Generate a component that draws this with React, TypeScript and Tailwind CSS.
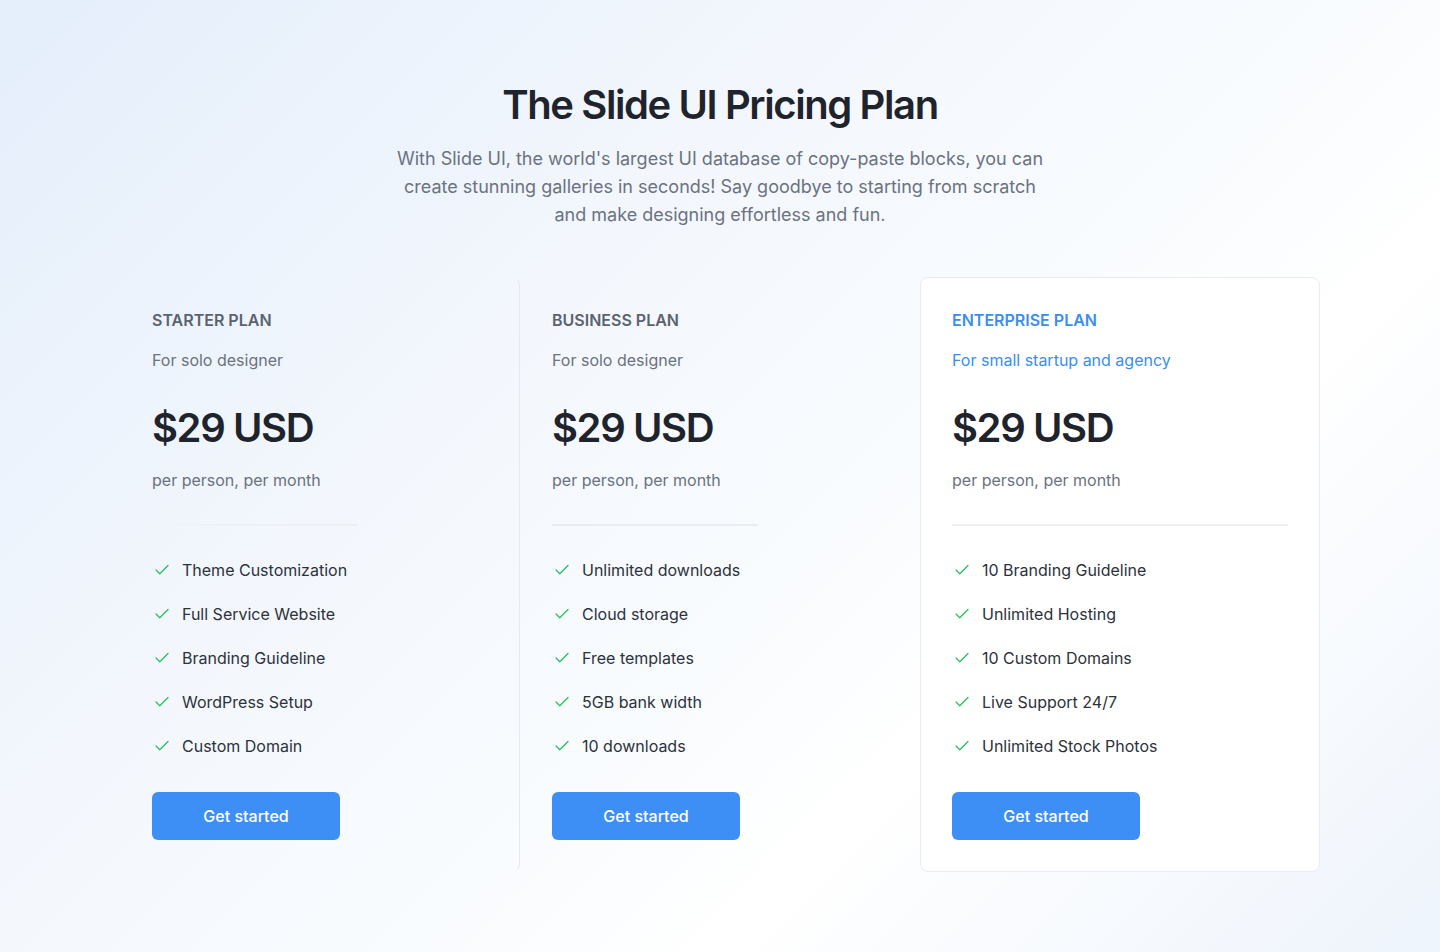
import { Check } from 'lucide-react';

type Plan = {
  name: string;
  tagline: string;
  price: string;
  features: string[];
  featured?: boolean;
};

const plans: Plan[] = [
  {
    name: 'STARTER PLAN',
    tagline: 'For solo designer',
    price: '$29 USD',
    features: ['Theme Customization', 'Full Service Website', 'Branding Guideline', 'WordPress Setup', 'Custom Domain'],
  },
  {
    name: 'BUSINESS PLAN',
    tagline: 'For solo designer',
    price: '$29 USD',
    features: ['Unlimited downloads', 'Cloud storage', 'Free templates', '5GB bank width', '10 downloads'],
  },
  {
    name: 'ENTERPRISE PLAN',
    tagline: 'For small startup and agency',
    price: '$29 USD',
    features: ['10 Branding Guideline', 'Unlimited Hosting', '10 Custom Domains', 'Live Support 24/7', 'Unlimited Stock Photos'],
    featured: true,
  },
];

function PlanCard({ plan, index }: { plan: Plan; index: number }) {
  // every card keeps a 1px border so the content lines up; only the last one is visible all round
  const cardClass = plan.featured
    ? 'bg-white border-[#e8ecf1]'
    : index === 0
    ? 'border-transparent border-r-[#e6eaf0]'
    : 'border-transparent';

  return (
    <div className={`flex flex-col border rounded-lg px-[31px] pt-[30px] pb-[31px] ${cardClass}`}>
      <p className={`text-base leading-6 font-semibold ${plan.featured ? 'text-[#3b8ef0]' : 'text-[#5b6270]'}`}>
        {plan.name}
      </p>
      <p className={`mt-4 text-base leading-6 ${plan.featured ? 'text-[#3b8ef0]' : 'text-[#6b7280]'}`}>
        {plan.tagline}
      </p>
      <p className="mt-8 text-[40px] leading-[48px] font-semibold tracking-[-0.035em] text-[#1f242c]">
        {plan.price}
      </p>
      <p className="mt-4 text-base leading-6 text-[#6b7280]">per person, per month</p>
      <div
        className={`mt-8 h-[2px] ${
          plan.featured
            ? 'w-full bg-[#eef0f3]'
            : index === 0
            ? 'w-[206px] bg-gradient-to-r from-transparent via-[#eceff3] to-[#eef1f4]'
            : 'w-[206px] bg-[#e9ecf0]'
        }`}
      />
      <ul className="mt-8 flex flex-col gap-5">
        {plan.features.map((feature) => (
          <li key={feature} className="flex items-center gap-3 text-base leading-6 text-[#2c323b]">
            <Check className="w-[18px] h-[18px] ml-px text-[#2fbf5b]" strokeWidth={1.75} />
            <span className="-ml-px">{feature}</span>
          </li>
        ))}
      </ul>
      <button className="mt-[34px] w-[188px] h-12 rounded-md bg-[#3d8ff5] text-white text-base font-medium">
        Get started
      </button>
    </div>
  );
}

export default function App() {
  return (
    <main
      className="min-h-[952px] w-full bg-[linear-gradient(135deg,#e4eefb_0%,#f3f7fd_35%,#f8fbfe_55%,#ffffff_70%,#eef4fc_100%)]"
      style={{ fontFamily: 'Inter, "Noto Sans", sans-serif' }}
    >
      <div className="max-w-[1200px] mx-auto pt-[81px]">
        <header className="flex flex-col items-center text-center">
          <h1 className="text-[40px] leading-[48px] font-semibold tracking-[-0.035em] text-[#1f242c]">
            The Slide UI Pricing Plan
          </h1>
          <p className="mt-4 w-[660px] text-lg leading-7 text-[#6b7280]">
            With Slide UI, the world's largest UI database of copy-paste blocks, you can create stunning galleries in
            seconds! Say goodbye to starting from scratch and make designing effortless and fun.
          </p>
        </header>

        <section className="mt-12 grid grid-cols-3">
          {plans.map((plan, i) => (
            <PlanCard key={plan.name} plan={plan} index={i} />
          ))}
        </section>
      </div>
    </main>
  );
}
